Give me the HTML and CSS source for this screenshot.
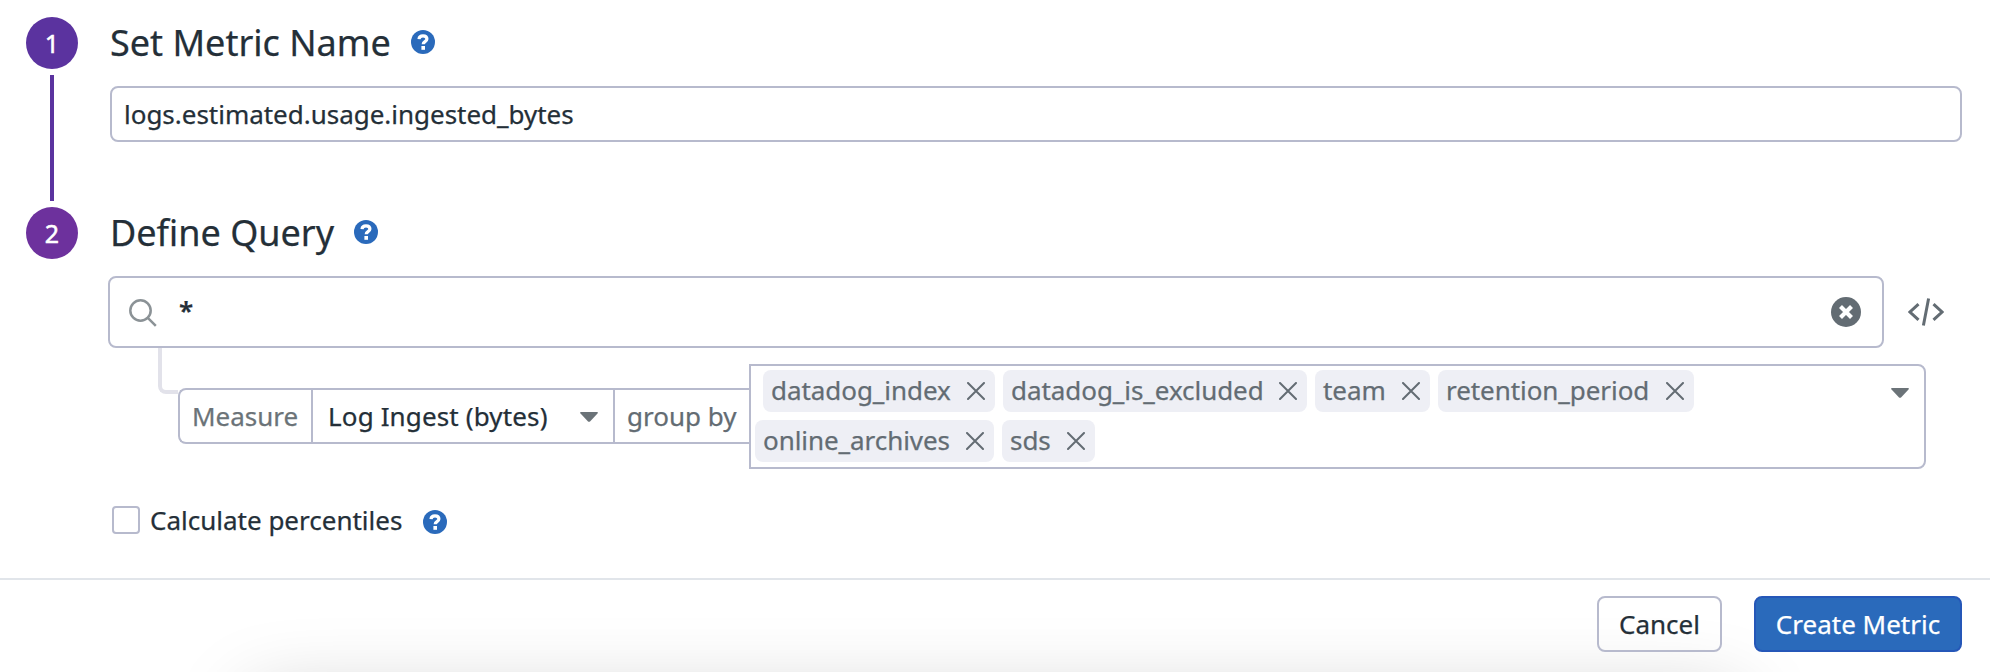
FILE: index.html
```
<!DOCTYPE html>
<html lang="en">
<head>
<meta charset="utf-8">
<title>Create Metric</title>
<link rel="stylesheet" href="styles.css">
</head>
<body>
<svg width="0" height="0" class="defs">
  <symbol id="help" viewBox="0 0 24 24"><circle cx="12" cy="12" r="12" fill="#2a6abb"/><path d="M8 9.1C8.2 6.900 9.800 5.900 12 5.900c2.300 0 3.900 1.200 3.900 3.100 0 2.700-3.700 2.600-3.700 5.200" fill="none" stroke="#fff" stroke-width="3.200"/><rect x="10.400" y="16" width="3.600" height="3.800" fill="#fff"/></symbol>
  <symbol id="x" viewBox="0 0 18 18"><path d="M1 1l16 16M17 1L1 17" fill="none" stroke="#636c73" stroke-width="2" stroke-linecap="round"/></symbol>
  <symbol id="caret" viewBox="0 0 18 10"><path d="M.8 0h16.400q1.200.4.300 1.500L10 9.400q-1 .9-2 0L.5 1.500Q-.4.400.8 0z" fill="#6b7378"/></symbol>
</svg>
<main class="form">
  <section class="step step-name">
    <div class="rail"><span class="badge badge-one">1</span><span class="rail-line"></span></div>
    <div class="body">
      <h2 class="title"><span class="t-name">Set Metric Name</span><svg class="help"><use href="#help"/></svg></h2>
      <div class="name-input"><span class="t-value">logs.estimated.usage.ingested_bytes</span></div>
    </div>
  </section>
  <section class="step">
    <div class="rail"><span class="badge badge-two">2</span></div>
    <div class="body">
      <h2 class="title"><span class="t-query">Define Query</span><svg class="help"><use href="#help"/></svg></h2>
      <div class="search-row">
        <div class="search">
          <svg class="search-icon" viewBox="0 0 28 28"><circle cx="11.500" cy="11.500" r="10.200"/><path d="M18.800 18.800l8 8"/></svg>
          <span class="star">*</span>
          <svg class="clear" viewBox="0 0 30 30"><circle cx="15" cy="15" r="15" fill="#636c73"/><path d="M9.500 9.500l11 11M20.500 9.500l-11 11" stroke="#fff" stroke-width="4.200"/></svg>
        </div>
        <svg class="code" viewBox="0 0 36 28"><path d="M10.500 6.200L2 14l8.500 7.800M25.500 6.200L34 14l-8.500 7.800M20.600.5l-5.200 27"/></svg>
      </div>
      <div class="measure-row">
        <span class="elbow"></span>
        <div class="measure">
          <span class="cell cell-label">Measure</span>
          <span class="cell cell-select"><span>Log Ingest (bytes)</span><svg class="caret"><use href="#caret"/></svg></span>
          <span class="cell cell-group">group by</span>
        </div>
        <div class="groups">
          <div class="tags">
            <div class="tag-line tag-line-first">
              <span class="tag w-index">datadog_index<svg><use href="#x"/></svg></span>
              <span class="tag w-excluded">datadog_is_excluded<svg><use href="#x"/></svg></span>
              <span class="tag w-team">team<svg><use href="#x"/></svg></span>
              <span class="tag w-retention">retention_period<svg><use href="#x"/></svg></span>
            </div>
            <div class="tag-line">
              <span class="tag w-archives">online_archives<svg><use href="#x"/></svg></span>
              <span class="tag w-sds">sds<svg><use href="#x"/></svg></span>
            </div>
          </div>
          <svg class="caret"><use href="#caret"/></svg>
        </div>
      </div>
      <div class="percentiles">
        <span class="checkbox"></span>
        <span class="t-percent">Calculate percentiles</span>
        <svg class="help"><use href="#help"/></svg>
      </div>
    </div>
  </section>
</main>
<footer class="footer">
  <button class="btn">Cancel</button>
  <button class="btn btn-primary">Create Metric</button>
</footer>
</body>
</html>
```
FILE: styles.css
```
* { box-sizing: border-box; }
body {
  margin: 0;
  height: 672px;
  overflow: hidden;
  display: flex;
  flex-direction: column;
  background: #fff;
  color: #242f38;
  font: 26px/36px "Noto Sans", sans-serif;
  -webkit-text-stroke: .25px currentColor;
}
.defs { position: absolute; }
svg { display: block; flex: none; }
.form { height: 578px; flex: none; padding: 17px 28px 0 26px; }
.step { display: flex; gap: 32px; }
.step-name { height: 190px; }
.rail { width: 52px; flex: none; display: flex; flex-direction: column; align-items: center; }
.badge {
  width: 52px;
  height: 52px;
  flex: none;
  border-radius: 50%;
  color: #fff;
  font-size: 25px;
  line-height: 52px;
  text-align: center;
  -webkit-text-stroke-width: .5px;
}
.badge-one { background: #5b339f; }
.badge-two { background: #6d319d; }
.rail-line { width: 4px; height: 126px; margin-top: 6px; background: #5b339f; }
.body { flex: 1; min-width: 0; }
.title {
  display: flex;
  margin: 0;
  height: 52px;
  font-size: 36px;
  font-weight: 400;
  line-height: 52px;
}
.help { width: 24px; height: 24px; }
.title .help { margin-top: 13px; }
.t-name { width: 301px; white-space: nowrap; }
.t-query { width: 244px; white-space: nowrap; }
.name-input {
  height: 56px;
  margin-top: 17px;
  padding: 8px 12px;
  border: 2px solid #b7bacd;
  border-radius: 8px;
}
.t-value { letter-spacing: -.02px; }
.search-row { display: flex; align-items: center; gap: 24px; margin: 17px 0 0 -2px; }
.search {
  width: 1776px;
  height: 72px;
  display: flex;
  align-items: center;
  border: 2px solid #b7bacd;
  border-radius: 8px;
  padding: 0 21px 0 19px;
}
.search-icon { width: 28px; height: 28px; margin-top: 1px; fill: none; stroke: #8b9296; stroke-width: 2.500; }
.star { flex: 1; margin: -4px 0 0 22px; font-weight: 600; }
.clear { width: 30px; height: 30px; }
.code { width: 36px; height: 28px; fill: none; stroke: #636c73; stroke-width: 3; }
.measure-row { display: flex; height: 121px; padding-left: 48px; }
.elbow {
  width: 20px;
  height: 46px;
  flex: none;
  border: solid #e2e2ea;
  border-width: 0 0 4px 4px;
  border-bottom-left-radius: 8px;
}
.measure {
  display: flex;
  width: 571px;
  height: 56px;
  margin-top: 40px;
  flex: none;
  border: 2px solid #b7bacd;
  border-right: 0;
  border-radius: 8px 0 0 8px;
}
.cell { padding-top: 8px; white-space: nowrap; }
.cell + .cell { border-left: 2px solid #b7bacd; }
.cell-label { width: 131px; padding-left: 12px; color: #6b7378; }
.cell-select { width: 302px; display: flex; justify-content: space-between; padding-left: 15px; padding-right: 15px; letter-spacing: .14px; }
.cell-select .caret { margin-top: 14px; }
.cell-group { padding-left: 12px; color: #636c73; }
.caret { width: 18px; height: 10px; }
.groups {
  display: flex;
  justify-content: space-between;
  width: 1177px;
  height: 105px;
  margin-top: 16px;
  padding: 4px 15px 0 4px;
  flex: none;
  border: 2px solid #b7bacd;
  border-radius: 0 8px 8px 0;
}
.groups > .caret { margin-top: 18px; }
.tags { display: flex; flex-direction: column; gap: 8px; }
.tag-line { display: flex; gap: 8px; }
.tag-line-first { padding-left: 8px; }
.tag {
  display: flex;
  justify-content: space-between;
  height: 42px;
  padding: 2px 10px 0 8px;
  border-radius: 8px;
  background: #eeeff5;
  color: #636c73;
  letter-spacing: -.06px;
  white-space: nowrap;
}
.tag svg { width: 18px; height: 18px; margin-top: 10px; }
.w-index { width: 232px; }
.w-excluded { width: 304px; }
.w-team { width: 115px; }
.w-retention { width: 256px; }
.w-archives { width: 239px; }
.w-sds { width: 93px; }
.percentiles { display: flex; margin-top: 37px; padding-left: 2px; }
.checkbox { width: 28px; height: 28px; border: 2px solid #b7bacd; border-radius: 4px; }
.t-percent { width: 273px; margin: -4px 0 0 10px; white-space: nowrap; }
.percentiles .help { margin-top: 4px; }
.footer {
  position: relative;
  height: 94px;
  flex: none;
  overflow: hidden;
  display: flex;
  justify-content: flex-end;
  gap: 32px;
  padding: 16px 28px 0;
  border-top: 2px solid #e1e5ea;
}
/* soft shadow rising from the lower edge */
.footer::before {
  content: "";
  position: absolute;
  left: 250px;
  right: 250px;
  top: 118px;
  height: 90px;
  box-shadow: 0 0 80px 0 rgba(0, 0, 0, .22);
}
.btn {
  position: relative;
  width: 125px;
  height: 56px;
  padding: 0 0 1px;
  border: 2px solid #b7bacd;
  border-radius: 8px;
  background: transparent;
  color: #242f38;
  font: inherit;
  white-space: nowrap;
}
.btn-primary { width: 208px; border-color: #2557b8; background: #2a6abb; color: #fff; }
```
